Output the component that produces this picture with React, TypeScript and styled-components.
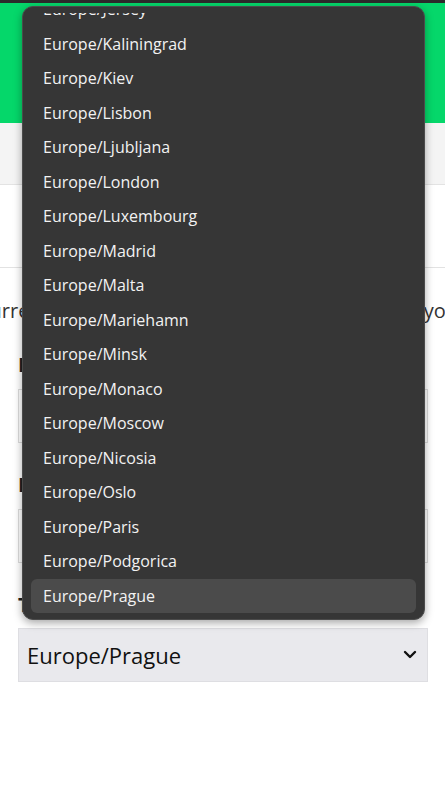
import React from "react";
import styled, { createGlobalStyle } from "styled-components";

const Global = createGlobalStyle`
  html, body { margin: 0; padding: 0; background: #fff; }
  body { width: 445px; height: 800px; overflow: hidden; font-family: "Open Sans", "Noto Sans", sans-serif; }
`;

const Page = styled.div`
  position: relative;
  width: 445px;
  height: 800px;
  overflow: hidden;
  display: flex;
  flex-direction: column;
`;

const Header = styled.header`
  height: 120px;
  background: #05d76a;
  border-top: 3px solid #2b2b2b;
`;

const NavBar = styled.nav`
  height: 61px;
  background: #f4f4f4;
  border-bottom: 1px solid #e3e3e3;
`;

const TitleBar = styled.div`
  height: 82px;
  border-bottom: 1px solid #e2e2e2;
`;

const Intro = styled.p`
  margin: 29px 0 0 -23px;
  white-space: nowrap;
  font-size: 20px;
  line-height: 28px;
  color: #333;
`;

const Form = styled.form`
  display: flex;
  flex-direction: column;
  padding: 0 17px 0 18px;
  margin-top: 26px;
`;

const Label = styled.label<{ $gap?: number }>`
  font-size: 20px;
  font-weight: 700;
  color: #222;
  line-height: 28px;
  margin-bottom: ${(p) => p.$gap ?? 10}px;
`;

const Input = styled.div`
  height: 52px;
  border: 1px solid #dcdcdc;
  margin-bottom: 28px;
`;

const SelectBox = styled.div`
  height: 52px;
  background: #e9e9ed;
  border: 1px solid #dedee2;
  display: flex;
  align-items: center;
  justify-content: space-between;
  padding: 0 10px 0 8px;
  font-size: 22px;
  color: #111;
`;

const Popup = styled.div`
  position: absolute;
  left: 22px;
  top: 6px;
  width: 403px;
  height: 614px;
  box-sizing: border-box;
  background: #363636;
  border: 1px solid #4b4b4b;
  border-radius: 11px;
  box-shadow: 0 3px 8px rgba(0, 0, 0, 0.35);
  padding: 6px 8px 6px;
  display: flex;
  flex-direction: column;
`;

const Viewport = styled.div`
  flex: 1;
  overflow: hidden;
`;

const List = styled.ul`
  list-style: none;
  margin: -21px 0 0 0;
  padding: 0;
`;

const Option = styled.li<{ $selected?: boolean }>`
  height: 34.5px;
  display: flex;
  align-items: center;
  padding-left: 12px;
  border-radius: 6px;
  font-size: 16px;
  color: #f2f2f2;
  background: ${(p) => (p.$selected ? "#4b4b4b" : "transparent")};
`;

const zones = [
  "Europe/Jersey",
  "Europe/Kaliningrad",
  "Europe/Kiev",
  "Europe/Lisbon",
  "Europe/Ljubljana",
  "Europe/London",
  "Europe/Luxembourg",
  "Europe/Madrid",
  "Europe/Malta",
  "Europe/Mariehamn",
  "Europe/Minsk",
  "Europe/Monaco",
  "Europe/Moscow",
  "Europe/Nicosia",
  "Europe/Oslo",
  "Europe/Paris",
  "Europe/Podgorica",
  "Europe/Prague",
];

export default function App() {
  return (
    <Page>
      <Global />
      <Header />
      <NavBar />
      <TitleBar />
      <Intro>Current timezone is used to show event time to you</Intro>
      <Form>
        <Label>Full name</Label>
        <Input />
        <Label>Email</Label>
        <Input />
        <Label $gap={9}>Timezone</Label>
        <SelectBox>
          <span>Europe/Prague</span>
          <svg width="14" height="10" viewBox="0 0 14 10">
            <path d="M2 2 L7 7 L12 2" fill="none" stroke="#111" strokeWidth="2.4" strokeLinecap="round" strokeLinejoin="round" />
          </svg>
        </SelectBox>
      </Form>
      <Popup>
        <Viewport>
          <List>
            {zones.map((z) => (
              <Option key={z} $selected={z === "Europe/Prague"}>
                {z}
              </Option>
            ))}
          </List>
        </Viewport>
      </Popup>
    </Page>
  );
}
